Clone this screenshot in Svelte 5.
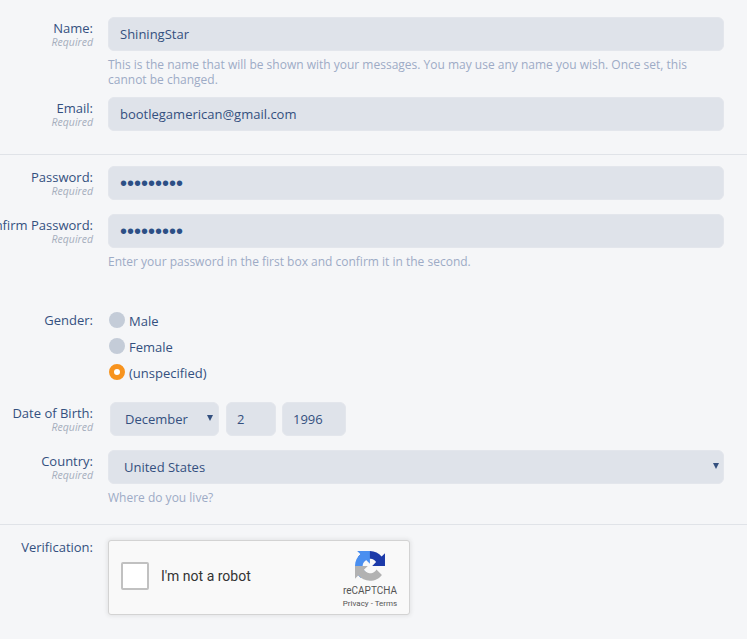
<script>
  const months = ['January','February','March','April','May','June','July','August','September','October','November','December'];
</script>

<form class="page">
  <div class="row first">
    <div class="lab"><label for="name">Name:</label><small>Required</small></div>
    <div class="field">
      <input id="name" class="box" type="text" value="ShiningStar" />
      <p class="hint">This is the name that will be shown with your messages. You may use any name you wish. Once set, this cannot be changed.</p>
    </div>
  </div>
  <div class="row tight">
    <div class="lab"><label for="email">Email:</label><small>Required</small></div>
    <div class="field"><input id="email" class="box" type="text" value="bootlegamerican@gmail.com" /></div>
  </div>

  <hr />

  <div class="row">
    <div class="lab"><label for="pw">Password:</label><small>Required</small></div>
    <div class="field"><input id="pw" class="box pw" type="password" value="123456789" /></div>
  </div>
  <div class="row gap">
    <div class="lab"><label for="pw2">Confirm Password:</label><small>Required</small></div>
    <div class="field">
      <input id="pw2" class="box pw" type="password" value="123456789" />
      <p class="hint">Enter your password in the first box and confirm it in the second.</p>
    </div>
  </div>

  <div class="row gender">
    <div class="lab"><span class="name">Gender:</span></div>
    <div class="radios">
      <label class="radio"><input type="radio" name="g" />Male</label>
      <label class="radio"><input type="radio" name="g" />Female</label>
      <label class="radio"><input type="radio" name="g" checked />(unspecified)</label>
    </div>
  </div>

  <div class="row dob">
    <div class="lab"><span class="name">Date of Birth:</span><small>Required</small></div>
    <div class="dates">
      <div class="sel month">
        <select class="box">
          {#each months as m}<option selected={m === 'December'}>{m}</option>{/each}
        </select>
      </div>
      <input class="box day" type="text" value="2" />
      <input class="box year" type="text" value="1996" />
    </div>
  </div>

  <div class="row country">
    <div class="lab"><label for="c">Country:</label><small>Required</small></div>
    <div class="field">
      <div class="sel">
        <select id="c" class="box"><option>United States</option></select>
      </div>
      <p class="hint">Where do you live?</p>
    </div>
  </div>

  <hr class="hr2" />

  <div class="row verif">
    <div class="lab"><span class="name">Verification:</span></div>
    <div class="captcha">
      <span class="check"></span>
      <span class="robot">I'm not a robot</span>
      <div class="brand">
        <svg viewBox="0 0 64 64" width="30" height="30" aria-hidden="true">
          <path d="M64 31.955l-.033-1.37V4.687l-7.16 7.16C50.948 4.674 42.033.093 32.05.093c-10.4 0-19.622 4.96-25.458 12.64l11.736 11.86a15.55 15.55 0 0 1 4.754-5.334c2.05-1.6 4.952-2.906 8.968-2.906.485 0 .86.057 1.135.163 4.976.393 9.288 3.14 11.828 7.124l-8.307 8.307c10.522-.04 22.4-.066 27.295.005" fill="#1c3aa9"/>
          <path d="M31.862 0l-1.37.033H4.594l7.16 7.16C4.58 13.052 0 21.967 0 31.95c0 10.4 4.96 19.622 12.64 25.458l11.86-11.736a15.55 15.55 0 0 1-5.334-4.754c-1.6-2.05-2.906-4.952-2.906-8.968 0-.485.057-.86.163-1.135.393-4.976 3.14-9.288 7.124-11.828l8.307 8.307c-.04-10.522-.066-22.4.005-27.295" fill="#4a8ff0"/>
          <path d="M.002 31.862l.033 1.37v25.898l7.16-7.16c5.86 7.173 14.775 11.754 24.76 11.754 10.4 0 19.622-4.96 25.458-12.64l-11.736-11.86a15.55 15.55 0 0 1-4.754 5.334c-2.05 1.6-4.952 2.906-8.968 2.906-.485 0-.86-.057-1.135-.163-4.976-.393-9.288-3.14-11.828-7.124l8.307-8.307c-10.522.04-22.4.066-27.295-.005" fill="#b2b2b2"/>
        </svg>
        <span class="re">reCAPTCHA</span>
        <span class="terms">Privacy - Terms</span>
      </div>
    </div>
  </div>
</form>

<style>
  :global(body) {
    margin: 0;
    background: #f5f6f8;
    overflow: hidden;
  }
  .page {
    height: 639px;
    padding-top: 17px;
    box-sizing: border-box;
    font-family: "Open Sans", sans-serif;
    font-size: 13px;
    line-height: 15px;
    color: #34507f;
  }
  .row {
    display: grid;
    grid-template-columns: 93px 1fr;
    column-gap: 15px;
    padding-right: 23px;
  }
  .tight { margin-top: 10px; }
  .gap { margin-top: 14px; }
  .gender { margin-top: 40px; }
  .dob { margin-top: 19px; }
  .country { margin-top: 14px; }
  .lab {
    display: flex;
    flex-direction: column;
    align-items: flex-end;
    padding-top: 3px;
    white-space: nowrap;
    min-width: 0;
  }
  .verif .lab { padding-top: 0; margin-top: -1px; }
  .lab label, .lab .name { line-height: 16px; }
  small {
    font-size: 10.5px;
    font-style: italic;
    line-height: 12px;
    margin-top: 0;
    color: #a6aebd;
  }
  .field { min-width: 0; }
  .box {
    display: block;
    width: 100%;
    height: 34px;
    box-sizing: border-box;
    padding: 0 11px;
    margin: 0;
    border: 1px solid #e3e6ec;
    border-radius: 6px;
    background: #dfe3ea;
    font: inherit;
    color: inherit;
    outline: none;
    appearance: none;
  }
  .pw { font-family: "Liberation Sans", sans-serif; font-size: 20px; color: #2c4f85; }
  .hint {
    margin: 6px 0 0;
    color: #9dabc6;
    font-size: 12px;
    line-height: 15px;
  }
  hr {
    border: 0;
    border-top: 1px solid #e0e3e8;
    margin: 23px 0 11px;
  }
  .hr2 { margin: 19px 0 15px; }
  .radios {
    display: flex;
    flex-direction: column;
    gap: 6px;
    padding-left: 1px;
    margin-top: 2px;
  }
  .radio {
    display: flex;
    align-items: center;
    height: 20px;
    gap: 4px;
  }
  .radio input {
    appearance: none;
    width: 16px;
    height: 16px;
    margin: -2px 0 0;
    border-radius: 50%;
    background: #c4ccd8;
    box-sizing: border-box;
  }
  .radio input:checked {
    background: #fff;
    border: 5px solid #f7931e;
  }
  .dates {
    display: flex;
    padding-left: 2px;
  }
  .month { width: 109px; }
  .day { width: 50px; margin-left: 7px; padding-left: 10px; }
  .year { width: 64px; margin-left: 6px; padding-left: 10px; }
  .sel { position: relative; }
  .sel select { padding-left: 15px; }
  .month select { padding-left: 14px; }
  .sel::after {
    content: "";
    position: absolute;
    right: 5px;
    top: 13px;
    border-left: 3px solid transparent;
    border-right: 3px solid transparent;
    border-top: 6px solid #34507f;
    pointer-events: none;
  }
  .month::after { right: 6px; }
  .captcha {
    width: 302px;
    height: 75px;
    box-sizing: border-box;
    padding-bottom: 3px;
    display: flex;
    align-items: center;
    background: #f9f9f9;
    border: 1px solid #d3d3d3;
    border-radius: 3px;
    box-shadow: 0 0 4px 1px rgba(0, 0, 0, 0.08);
    font-family: Roboto, sans-serif;
    color: #000;
    position: relative;
  }
  .check {
    width: 28px;
    height: 28px;
    margin-left: 12px;
    box-sizing: border-box;
    background: #fff;
    border: 2px solid #c1c1c1;
    border-radius: 2px;
  }
  .robot {
    margin-left: 12px;
    font-size: 14px;
    color: #333;
  }
  .brand {
    position: absolute;
    right: 11px;
    top: 10px;
    width: 56px;
    display: flex;
    flex-direction: column;
    align-items: center;
    color: #555;
  }
  .re { font-size: 10px; line-height: 12px; margin-top: 4px; }
  .terms { font-size: 8px; line-height: 10px; margin-top: 2px; white-space: nowrap; }
</style>
